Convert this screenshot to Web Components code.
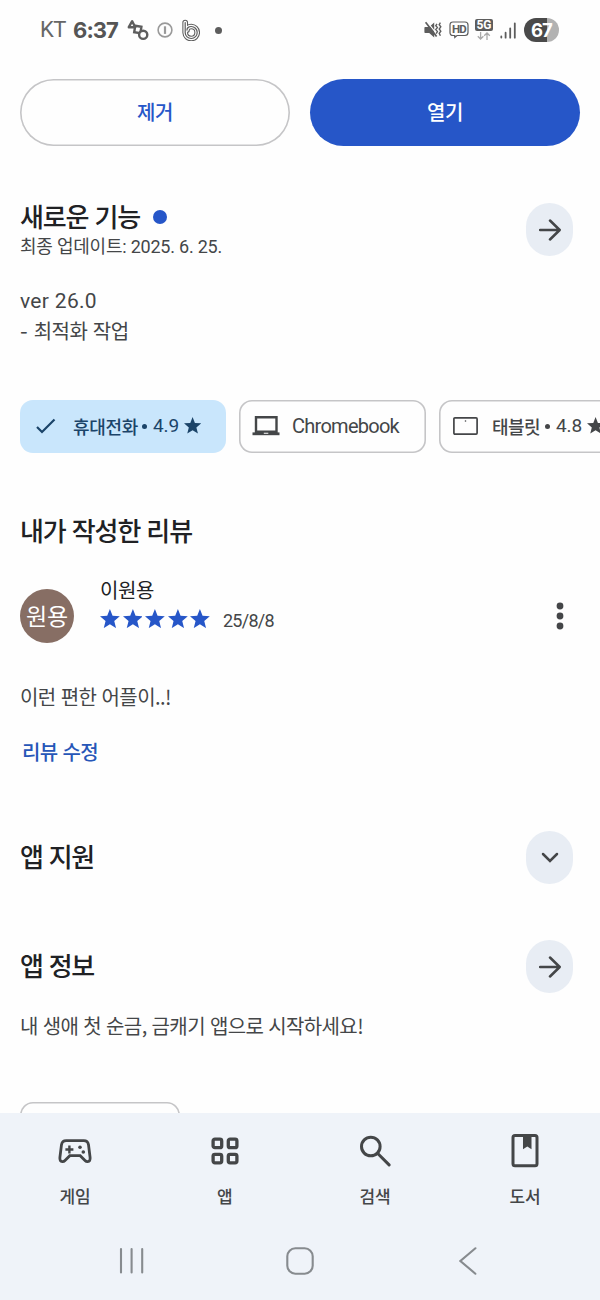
<!DOCTYPE html>
<html lang="ko">
<head>
<meta charset="utf-8">
<title>앱 상세</title>
<style>
html,body{margin:0;padding:0}
body{width:600px;height:1300px;overflow:hidden;background:#fefefe;font-family:"Noto Sans CJK KR","Noto Sans",sans-serif}
</style>
</head>
<body>
<app-page></app-page>
<script>
const define=(name,html,init)=>customElements.define(name,class extends HTMLElement{
  constructor(){super();this.attachShadow({mode:'open'}).innerHTML=html;}
  connectedCallback(){if(init)init.call(this,this.shadowRoot);}
});

/* Text run: size, weight and colour from attributes; "w" sets the run's width through tracking. */
define('ui-text',`<style>:host{display:block;white-space:nowrap;line-height:30px;height:30px;flex:none}span{display:inline-block}</style><span><slot></slot></span>`,function(r){
  const s=r.querySelector('span');
  this.style.fontSize=this.getAttribute('size')+'px';
  this.style.fontWeight=this.getAttribute('weight')||400;
  this.style.color=this.getAttribute('color')||'#444648';
  if(this.getAttribute('font'))this.style.fontFamily='"'+this.getAttribute('font')+'","Noto Sans CJK KR",sans-serif';
  const w=+this.getAttribute('w');
  if(w){const n=this.textContent.length;this.style.letterSpacing=((w-s.getBoundingClientRect().width)/n)+'px';}
});

/* Icons, each in its own coordinate box */
const STAR='M10 0l2.7 6.9 7.3.5-5.6 4.8 1.8 7.1L10 15.3l-6.2 4 1.8-7.1L0 7.4l7.3-.5z';
const ICONS={
 shapes:['22 22','<g fill="none" stroke="#5d5d5d" stroke-width="2.4"><path d="M5.2 2.2l3 6H1.8z" stroke-linejoin="round"/><path d="M8.2 6.8l6.2 1-1 6.4-6.2-1z"/><circle cx="16.2" cy="15.8" r="4.1" fill="#fefefe"/></g>'],
 info:['16 16','<g fill="none" stroke="#9a9a9a"><circle cx="8" cy="8" r="6.9" stroke-width="1.6"/><path d="M8 4.3v7.6" stroke-width="2.2"/></g>'],
 bee:['18 22','<g fill="none" stroke-linecap="round"><path d="M3.2 3.5v10.2a6 6 0 1 0 6-6.2c-2.5 0-4.2 1.5-4.2 3.6" stroke="#5d5d5d" stroke-width="5.7"/><path d="M3.2 3.5v10.2a6 6 0 1 0 6-6.2c-2.5 0-4.2 1.5-4.2 3.6" stroke="#fefefe" stroke-width="3.6"/><path d="M3.2 3.5v10.2a6 6 0 1 0 6-6.2c-2.5 0-4.2 1.5-4.2 3.6" stroke="#5d5d5d" stroke-width="1.2"/></g>'],
 mute:['18 18','<path d="M1.2 6h4l5-4.4v14.8l-5-4.4h-4q-.8 0-.8-.8V6.8q0-.8.8-.8z" fill="#5d5d5d"/><path d="M3.2 .8l11 14" stroke="#fefefe" stroke-width="1.2"/><path d="M1.6 1.2l11 14.4" stroke="#5d5d5d" stroke-width="1.7"/><path d="M13 2.8l-1.2 1.8 1.6 2-1.6 2 1.6 2-1.2 2M16.4 1.6l-1.2 2 1.6 2.2-1.6 2.2 1.6 2.2-1.6 2.2 1.2 2.4" fill="none" stroke="#5d5d5d" stroke-width="1.4"/>'],
 hd:['20 18','<path d="M4 1h12q3 0 3 3v7.5q0 3-3 3H8l-2.2 2v-2H4q-3 0-3-3V4q0-3 3-3z" fill="none" stroke="#5d5d5d" stroke-width="1.2"/>'],
 data:['14 8','<g fill="none" stroke="#aaa" stroke-width="1.3"><path d="M3.6 0v6.8M.8 4.2l2.8 2.8 2.8-2.8M10 8V1.2M7.2 3.8L10 1l2.8 2.8"/></g>'],
 signal:['16 17','<g stroke="#5d5d5d" stroke-width="1.8" stroke-linecap="round"><path d="M1.3 14.5v1M5.6 10.7v5M10.2 6.3v9.4M14.8 1.3v14.4"/></g>'],
 arrow:['22 22','<path d="M1 11h19.5M11 1.5l9.7 9.5-9.7 9.5" fill="none" stroke="#444648" stroke-width="2.5" stroke-linecap="round" stroke-linejoin="round"/>'],
 down:['18 12','<path d="M2 2l7 7 7-7" fill="none" stroke="#444648" stroke-width="2.5" stroke-linecap="round"/>'],
 check:['20 16','<path d="M1 9l5 5L18.5 1.5" fill="none" stroke="#1b4469" stroke-width="2.2"/>'],
 laptop:['28 20','<path d="M4 1.3h20.5v14.4H4z" fill="none" stroke="#444648" stroke-width="2.4"/><path d="M.5 16.4h27v2.8H.5z" fill="#444648"/><path d="M11.8 16.8h4.5v1h-4.5z" fill="#fff"/>'],
 tablet:['25 18','<rect x=".9" y=".9" width="23.2" height="16.2" rx="1" fill="none" stroke="#444648" stroke-width="1.7"/><circle cx="12.5" cy="4" r=".8" fill="#444648"/>'],
 star:['20 20',`<path d="${STAR}" fill="currentColor"/>`],
 more:['8 28','<g fill="#444648"><circle cx="4" cy="4" r="3.4"/><circle cx="4" cy="14" r="3.4"/><circle cx="4" cy="24" r="3.4"/></g>'],
 game:['34 26','<path d="M8.2 1.7h17.6q4 0 4.7 4l1.6 12.8q.4 4-2.4 4.2-1.5.1-2.7-1.2l-4.8-4.8H11.8L7 21.5q-1.2 1.3-2.7 1.2-2.8-.2-2.4-4.2L3.5 5.7q.7-4 4.7-4z" fill="none" stroke="#444648" stroke-width="2.8"/><path d="M11.4 6.5v8M7.4 10.5h8" stroke="#444648" stroke-width="2.4"/><circle cx="22" cy="8.2" r="1.8" fill="#444648"/><circle cx="25.3" cy="13" r="1.8" fill="#444648"/>'],
 apps:['28 28','<g fill="none" stroke="#444648" stroke-width="3.3"><rect x="2.1" y="2.1" width="8.6" height="8.6" rx="1.8"/><rect x="17.3" y="2.1" width="8.6" height="8.6" rx="1.8"/><rect x="2.1" y="17.3" width="8.6" height="8.6" rx="1.8"/><rect x="17.3" y="17.3" width="8.6" height="8.6" rx="1.8"/></g>'],
 search:['32 32','<g fill="none" stroke="#444648" stroke-width="3"><circle cx="11.8" cy="11.5" r="9.3"/><path d="M18.5 18.3l11.6 11.6" stroke-linecap="round"/></g>'],
 book:['28 36','<rect x="2" y="2.4" width="24" height="30.4" rx="2" fill="none" stroke="#444648" stroke-width="3"/><path d="M12 2h8.5v14.2l-4.2-2.6-4.3 2.6z" fill="#444648"/>'],
 recent:['26 28','<path d="M2 2v23.5M12.6 2v23.5M23.2 2v23.5" stroke="#878b8f" stroke-width="2.1" stroke-linecap="round"/>'],
 home:['28 28','<rect x="1.3" y="1.3" width="25.4" height="25.4" rx="8" fill="none" stroke="#878b8f" stroke-width="2.1"/>'],
 back:['18 28','<path d="M16.4 1.3L1.4 14l15 12.7" fill="none" stroke="#878b8f" stroke-width="2.1" stroke-linecap="round"/>']
};
define('ui-icon',`<style>:host{display:block;flex:none}svg{display:block}</style><div></div>`,function(r){
  const [b,m]=ICONS[this.getAttribute('name')],[w,h]=b.split(' ');
  const s=+(this.getAttribute('scale')||1);
  r.querySelector('div').innerHTML=`<svg width="${w*s}" height="${h*s}" viewBox="0 0 ${w} ${h}">${m}</svg>`;
});

define('status-bar',`<style>
:host{display:flex;height:60px;box-sizing:border-box;padding:0 41px 0 40px;align-items:center}
.sp{flex:1}
.hd,.bat{display:grid;place-items:center}.hd>*,.bat>*{grid-area:1/1}
.hd ui-text{height:17px;line-height:15px}
.g{width:18px;height:12px;background:#5d5d5d;border-radius:2px;display:grid;place-items:center}
.g ui-text{height:12px;line-height:12px}
.net{display:flex;flex-direction:column;align-items:center;gap:1px;margin-top:-2px}
.bat{width:35px;height:24px;border-radius:12px;background:linear-gradient(90deg,#4a4a4a 67%,#b2b2b2 67%)}
.bat ui-text{height:24px;line-height:24px}
.dot{width:7px;height:7px;border-radius:50%;background:#5d5d5d}
</style>
<ui-text size="22" w="26" color="#666" font="Roboto">KT</ui-text>
<ui-text size="22" w="45" weight="700" color="#555" font="Inter" style="margin-left:7px">6:37</ui-text>
<ui-icon name="shapes" style="margin-left:9px"></ui-icon>
<ui-icon name="info" style="margin-left:8px"></ui-icon>
<ui-icon name="bee" style="margin-left:9px"></ui-icon>
<div class="dot" style="margin-left:15px"></div>
<div class="sp"></div>
<ui-icon name="mute"></ui-icon>
<div class="hd" style="margin-left:7px"><ui-icon name="hd"></ui-icon><ui-text size="11.5" w="14" weight="700" color="#5d5d5d" font="Roboto">HD</ui-text></div>
<div class="net" style="margin-left:6px"><div class="g"><ui-text size="12" w="15" weight="700" color="#fff" font="Roboto">5G</ui-text></div><ui-icon name="data"></ui-icon></div>
<ui-icon name="signal" style="margin-left:7px"></ui-icon>
<div class="bat" style="margin-left:8px"><ui-text size="18.5" w="21" weight="700" color="#fff" font="Inter">67</ui-text></div>`);

define('pill-button',`<style>:host{display:flex;flex:1;height:67px;box-sizing:border-box;box-shadow:inset 0 0 0 1.6px #c5c5c7;border-radius:34px;align-items:center;justify-content:center;padding-bottom:1px}:host([filled]){background:#2656c8;box-shadow:none}</style><slot></slot>`);
define('round-button',`<style>:host{display:flex;flex:none;width:47px;height:53px;border-radius:24px;background:#e8edf4;align-items:center;justify-content:center}</style><slot></slot>`);
define('filter-chip',`<style>:host{display:flex;flex:none;height:53px;box-sizing:border-box;padding-bottom:1px;box-shadow:inset 0 0 0 1.6px #c5c5c7;border-radius:13px;align-items:center;color:#444648}:host([on]){background:#c9e6fc;box-shadow:none;color:#1b4469}</style><slot></slot>`);
define('section-head',`<style>:host{display:flex;height:53px;align-items:center;padding:0 27px 0 20px;justify-content:space-between}</style><slot></slot>`);
define('nav-tab',`<style>:host{display:flex;flex:1;flex-direction:column;align-items:center}.i{height:40px;display:flex;align-items:center}::slotted(ui-text){margin-top:10px}</style><div class="i"><slot name="icon"></slot></div><slot></slot>`);
define('bottom-bar',`<style>
:host{display:block;height:187px;background:#eff3f9;flex:none}
.tabs{display:flex;padding-top:18px;height:108px;box-sizing:border-box}
.sys{display:grid;grid-template-columns:168px 168px 168px;justify-content:center;justify-items:center;align-items:center;height:79px}
</style>
<div class="tabs">
<nav-tab><ui-icon slot="icon" name="game" style="margin-top:2px"></ui-icon><ui-text size="17" w="31" weight="500">게임</ui-text></nav-tab>
<nav-tab><ui-icon slot="icon" name="apps"></ui-icon><ui-text size="17" w="16" weight="500">앱</ui-text></nav-tab>
<nav-tab><ui-icon slot="icon" name="search"></ui-icon><ui-text size="17" w="31" weight="500">검색</ui-text></nav-tab>
<nav-tab><ui-icon slot="icon" name="book"></ui-icon><ui-text size="17" w="31" weight="500">도서</ui-text></nav-tab>
</div>
<div class="sys"><ui-icon name="recent"></ui-icon><ui-icon name="home"></ui-icon><ui-icon name="back"></ui-icon></div>`);

define('my-review',`<style>
:host{display:flex;padding:0 36px 0 20px;height:60px}
.av{width:54px;height:54px;border-radius:50%;background:#876e64;display:flex;align-items:center;justify-content:center;margin-top:11px}
.b{margin-left:26px;flex:1}.r{display:flex;align-items:center;color:#2656c8;gap:2.8px;height:29px}
.r ui-text{margin:5px 0 0 10px}
.m{margin-top:24px}
</style>
<div class="av"><ui-text size="23" w="42" color="#fff" style="margin-top:-3px">원용</ui-text></div>
<div class="b"><ui-text size="20" w="54" color="#202124" style="margin-top:-3px">이원용</ui-text>
<div class="r" style="margin-top:-1px"><ui-icon name="star" scale=".99"></ui-icon><ui-icon name="star" scale=".99"></ui-icon><ui-icon name="star" scale=".99"></ui-icon><ui-icon name="star" scale=".99"></ui-icon><ui-icon name="star" scale=".99"></ui-icon><ui-text size="18" w="51" font="Roboto">25/8/8</ui-text></div></div>
<ui-icon class="m" name="more"></ui-icon>`);

define('app-page',`<style>
:host{display:flex;flex-direction:column;width:600px;height:1300px;overflow:hidden}
main{flex:1;min-height:0;overflow:hidden}
.btns{display:flex;gap:20px;padding:19px 20px 0}
.t{display:flex;align-items:center}
.dot{width:14px;height:14px;border-radius:50%;background:#2656c8;margin-left:13px;margin-top:2px}
.p{padding-left:20px}
.chips{display:flex;gap:13px;padding-left:20px;margin-top:54px}
.b{width:5px;height:5px;border-radius:50%;background:currentColor;flex:none}
.stub{margin:61px 0 0 20px;width:160px;height:53px;box-sizing:border-box;box-shadow:inset 0 0 0 1.6px #c5c5c7;border-radius:13px}
</style>
<status-bar></status-bar>
<main>
<div class="btns"><pill-button><ui-text size="20" w="36" weight="500" color="#2656c8">제거</ui-text></pill-button><pill-button filled><ui-text size="20" w="36" weight="500" color="#fff">열기</ui-text></pill-button></div>
<section-head style="margin-top:57px"><div style="padding-top:4px"><div class="t"><ui-text size="26" w="120" weight="500" color="#202124">새로운 기능</ui-text><div class="dot"></div></div><ui-text size="18" w="202" font="Roboto" style="margin-top:1px">최종 업데이트: 2025. 6. 25.</ui-text></div><round-button><ui-icon name="arrow"></ui-icon></round-button></section-head>
<div class="p" style="margin-top:30px"><ui-text size="21" w="77" font="Roboto">ver 26.0</ui-text><div class="t"><ui-text size="22">-</ui-text><ui-text size="20" w="95" style="margin-left:6px">최적화 작업</ui-text></div></div>
<div class="chips">
<filter-chip on style="width:206px;padding-left:16px"><ui-icon name="check"></ui-icon><ui-text style="margin-left:17px" size="18" w="65" weight="500" color="#1b4469">휴대전화</ui-text><i class="b" style="margin-left:4px"></i><ui-text style="margin-left:6px" size="19" color="#1b4469" w="26" font="Roboto">4.9</ui-text><ui-icon name="star" scale=".86" style="margin-left:5px"></ui-icon></filter-chip>
<filter-chip style="width:187px;padding-left:13px"><ui-icon name="laptop"></ui-icon><ui-text style="margin-left:12px" size="20" w="107" font="Roboto">Chromebook</ui-text></filter-chip>
<filter-chip style="width:206px;padding-left:14px"><ui-icon name="tablet"></ui-icon><ui-text style="margin-left:14px" size="18" w="48" weight="500">태블릿</ui-text><i class="b" style="margin-left:5px"></i><ui-text style="margin-left:6px" size="19" w="26" font="Roboto">4.8</ui-text><ui-icon name="star" scale=".86" style="margin-left:5px"></ui-icon></filter-chip>
</div>
<div class="p" style="margin-top:62px"><ui-text size="26" w="172" weight="500" color="#202124">내가 작성한 리뷰</ui-text></div>
<my-review style="margin-top:33px"></my-review>
<div class="p" style="margin-top:44px"><ui-text size="20" w="151">이런 편한 어플이..!</ui-text></div>
<div style="padding-left:22px;margin-top:25px"><ui-text size="20" w="76" weight="500" color="#2656b8">리뷰 수정</ui-text></div>
<section-head style="margin-top:64px"><ui-text size="26" w="74" weight="500" color="#202124" style="margin-top:-4px">앱 지원</ui-text><round-button><ui-icon name="down"></ui-icon></round-button></section-head>
<section-head style="margin-top:56px"><ui-text size="26" w="74" weight="500" color="#202124" style="margin-top:-4px">앱 정보</ui-text><round-button><ui-icon name="arrow"></ui-icon></round-button></section-head>
<div class="p" style="margin-top:18px"><ui-text size="20" w="343">내 생애 첫 순금, 금캐기 앱으로 시작하세요!</ui-text></div>
<div class="stub"></div>
</main>
<bottom-bar></bottom-bar>`);
</script>
</body>
</html>
